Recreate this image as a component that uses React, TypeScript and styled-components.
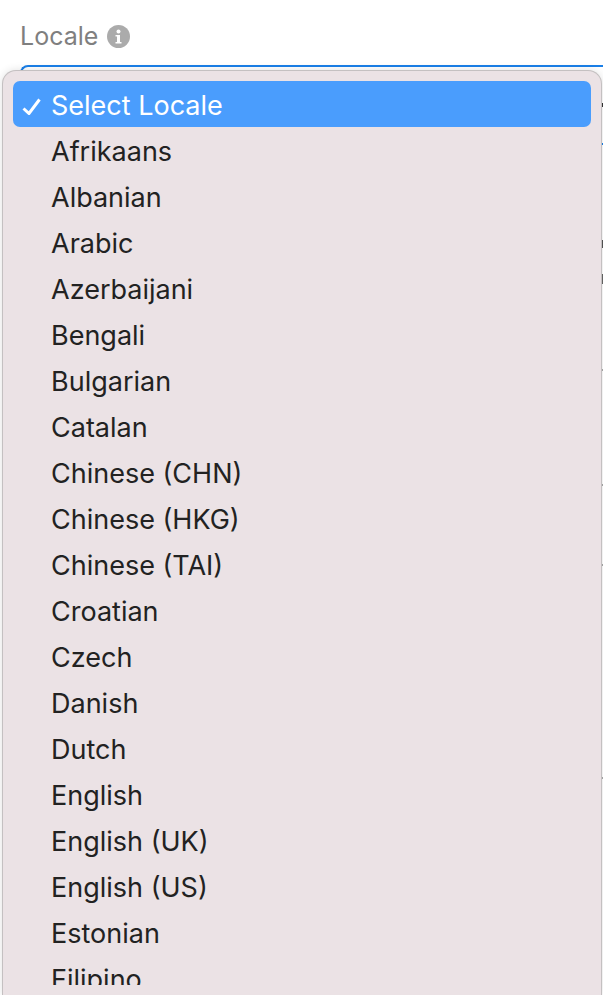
import styled, { createGlobalStyle } from "styled-components";

const locales = [
  "Afrikaans",
  "Albanian",
  "Arabic",
  "Azerbaijani",
  "Bengali",
  "Bulgarian",
  "Catalan",
  "Chinese (CHN)",
  "Chinese (HKG)",
  "Chinese (TAI)",
  "Croatian",
  "Czech",
  "Danish",
  "Dutch",
  "English",
  "English (UK)",
  "English (US)",
  "Estonian",
  "Filipino",
];

// slivers of the form behind the menu that show past its right edge
const peeks = [
  { gap: 95, height: 8, color: "#555" },
  { gap: 26, height: 10, color: "#666" },
  { gap: 85, height: 2, color: "#aaa" },
  { gap: 113, height: 2, color: "#aaa" },
  { gap: 78, height: 2, color: "#aaa" },
  { gap: 211, height: 2, color: "#aaa" },
];

const Global = createGlobalStyle`
  html, body {
    margin: 0;
    height: 100%;
    overflow: hidden;
    background: #fff;
  }
`;

const Page = styled.div`
  position: relative;
  width: 603px;
  height: 995px;
  overflow: hidden;
  padding: 20px 0 0 20px;
  box-sizing: border-box;
  font-family: Inter, "Liberation Sans", sans-serif;
`;

const Label = styled.label`
  display: flex;
  align-items: center;
  gap: 9px;
  height: 32px;
  font-size: 25px;
  color: #7f7f7f;
`;

const InfoIcon = styled.svg`
  width: 23px;
  height: 23px;
  flex: none;
`;

const Field = styled.div`
  display: flex;
  align-items: center;
  justify-content: flex-end;
  height: 76px;
  margin-top: 13px;
  border: 2px solid #1a7fe8;
  border-right: none;
  border-radius: 8px 0 0 8px;
`;

const FieldArrow = styled.span`
  width: 3px;
  height: 4px;
  background: #333;
`;

const Backdrop = styled.div`
  display: flex;
  flex-direction: column;
  align-items: flex-end;
`;

const Peek = styled.div<{ $gap: number; $height: number; $color: string }>`
  width: 2px;
  height: ${(p) => p.$height}px;
  margin-top: ${(p) => p.$gap}px;
  background: ${(p) => p.$color};
`;

const Menu = styled.div`
  position: absolute;
  top: 70px;
  left: 2px;
  width: 600px;
  height: 925px;
  box-sizing: border-box;
  padding: 10px 10px 0;
  background: #ebe2e5;
  border: 1px solid #c4c0c1;
  border-bottom: none;
  border-radius: 14px 14px 0 0;
  box-shadow: 0 0 8px rgba(0, 0, 0, 0.12);
`;

const Options = styled.ul`
  list-style: none;
  margin: 0;
  padding: 0;
  height: 904px;
  overflow: hidden;
`;

const Option = styled.li<{ $selected?: boolean }>`
  position: relative;
  height: 46px;
  line-height: 50px;
  padding-left: 38px;
  font-size: 27px;
  border-radius: 7px;
  color: ${(p) => (p.$selected ? "#fff" : "#222")};
  background: ${(p) => (p.$selected ? "#4a9dfd" : "transparent")};
`;

const Check = styled.svg`
  position: absolute;
  left: 9px;
  top: 17px;
  width: 19px;
  height: 17px;
`;

export default function App() {
  return (
    <Page>
      <Global />
      <Label>
        Locale
        <InfoIcon viewBox="0 0 23 23">
          <circle cx="11.5" cy="11.5" r="11.5" fill="#ababab" />
          <circle cx="11.5" cy="6.5" r="2" fill="#fff" />
          <path d="M8.5 10h4.5v7h1.5v1.5h-6V17h1.5v-5.5H8.5z" fill="#fff" />
        </InfoIcon>
      </Label>
      <Field>
        <FieldArrow />
      </Field>
      <Backdrop>
        {peeks.map((p, i) => (
          <Peek key={i} $gap={p.gap} $height={p.height} $color={p.color} />
        ))}
      </Backdrop>
      <Menu>
        <Options>
          <Option $selected>
            <Check viewBox="0 0 19 17">
              <path
                d="M1.5 10.5L7 15.5L17.5 1.5"
                fill="none"
                stroke="#fff"
                strokeWidth="3"
              />
            </Check>
            Select Locale
          </Option>
          {locales.map((name) => (
            <Option key={name}>{name}</Option>
          ))}
        </Options>
      </Menu>
    </Page>
  );
}
